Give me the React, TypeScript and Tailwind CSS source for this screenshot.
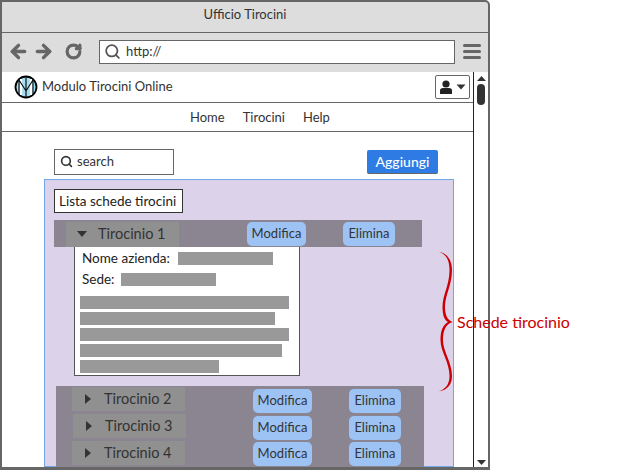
import React from 'react';
import { ArrowLeft, ArrowRight, RotateCw, Search } from 'lucide-react';

const uiFont = "font-['Lato','Noto_Sans',sans-serif]";

function ToolbarIcons() {
  return (
    <div className="flex items-center gap-[4px] text-[#666666]">
      <ArrowLeft className="w-[21px] h-[21px]" strokeWidth={4} />
      <ArrowRight className="w-[21px] h-[21px]" strokeWidth={4} />
      <RotateCw className="w-[17px] h-[17px] ml-[7px]" strokeWidth={4.5} />
    </div>
  );
}

function Logo() {
  return (
    <svg width="24" height="24" viewBox="0 0 24 24" className="shrink-0">
      <circle cx="12" cy="12" r="10.5" fill="#a5def0" stroke="#000" strokeWidth="1.8" />
      <path d="M7 4 L7 20 M17 4 L17 20" stroke="#fff" strokeWidth="2.2" />
      <path d="M5 20 L5 5 L12 16 L19 5 L19 20 M12 2 L12 22" fill="none" stroke="#111" strokeWidth="1.2" />
    </svg>
  );
}

function UserButton() {
  return (
    <div className="w-[35px] h-[24px] border border-[#666666] rounded-[2px] flex items-center justify-center gap-[2px] bg-white">
      <svg width="15" height="15" viewBox="0 0 15 15">
        <circle cx="7" cy="4" r="3.6" fill="#222" />
        <path d="M1 14 L1 10.5 Q1 8 4 8 L10 8 Q13 8 13 10.5 L13 14 Z" fill="#222" />
      </svg>
      <svg width="10" height="6" viewBox="0 0 10 6">
        <path d="M0.5 0.5 H9.5 L5 5.5 Z" fill="#333" />
      </svg>
    </div>
  );
}

function Scrollbar() {
  return (
    <div className="w-[15px] shrink-0 border-l border-[#222222] bg-white flex flex-col items-center pt-[4px] pb-[1px] justify-between">
      <div className="flex flex-col items-center gap-[3px]">
        <svg width="9" height="5" viewBox="0 0 9 5">
          <path d="M4.5 0 L9 5 H0 Z" fill="#333" />
        </svg>
        <div className="w-[8px] h-[21px] rounded-[4px] bg-[#333333]" />
      </div>
      <svg width="9" height="5" viewBox="0 0 9 5" className="mb-[1px]">
        <path d="M0 0 H9 L4.5 5 Z" fill="#333" />
      </svg>
    </div>
  );
}

function ActionButton({ label, width }: { label: string; width: string }) {
  return (
    <div className={`${width} h-[24px] rounded-[5px] bg-[#9dc3f5] text-[#333333] text-[13px] flex items-center justify-center`}>
      {label}
    </div>
  );
}

function Caret({ open }: { open?: boolean }) {
  return open ? (
    <svg width="10" height="6" viewBox="0 0 10 6" className="shrink-0">
      <path d="M0 0 H10 L5 6 Z" fill="#333" />
    </svg>
  ) : (
    <svg width="6" height="10" viewBox="0 0 6 10" className="shrink-0">
      <path d="M0 0 L6 5 L0 10 Z" fill="#333" />
    </svg>
  );
}

function ClosedRow({ title, shift, tight }: { title: string; shift?: boolean; tight?: boolean }) {
  return (
    <div className="flex items-start h-[26px]">
      <div className={`${shift ? 'ml-[17px]' : 'ml-[16px]'} w-[113px] h-[24px] bg-[#909090] flex items-center pl-[13px] gap-[13px] text-[14.5px] text-[#333333]`}>
        <Caret />
        <span>{title}</span>
      </div>
      <div className={`${shift ? 'ml-[67px]' : 'ml-[68px]'} ${tight ? 'mt-[1px]' : 'mt-[2px]'}`}>
        <ActionButton label="Modifica" width="w-[59px]" />
      </div>
      <div className={`ml-[37px] ${tight ? 'mt-[1px]' : 'mt-[2px]'}`}>
        <ActionButton label="Elimina" width="w-[52px]" />
      </div>
    </div>
  );
}

function GreyField({ width }: { width: string }) {
  return <div className={`${width} h-[13px] bg-[#999999]`} />;
}

function Brace() {
  return (
    <svg width="20" height="144" viewBox="436 250 20 144" className="absolute left-[436px] top-[250px] pointer-events-none">
      <path
        d="M439 252 C447 253 452 260 452 270 C452 285 445 295 445 307 C445 314 447 320 452.5 322 C446 324 443 330 443 340 C443 352 452 362 452 376 C452 385 447 390 439 391.5 C445 389 449.5 385 449.5 376 C449.5 362 440.5 352 440.5 340 C440.5 330 443 325 448 322 C444 320 442.5 314 442.5 307 C442.5 295 449.5 285 449.5 270 C449.5 260 446 254 439 252 Z"
        fill="#cc0000"
      />
    </svg>
  );
}

export default function App() {
  return (
    <div className={`relative w-[617px] h-[470px] overflow-hidden bg-white ${uiFont}`}>
      <div className="w-[490px] h-[470px] flex flex-col border-2 border-b-[3px] border-[#666666] rounded-tr-[5px] bg-[#dddddd] overflow-hidden">
        <div className="h-[31px] shrink-0 border-b border-[#666666] flex items-center justify-center pb-[5px] text-[13px] text-[#333333]">
          Ufficio Tirocini
        </div>
        <div className="h-[39px] shrink-0 flex items-center pl-[6px] pr-[5px] pb-[2px]">
          <ToolbarIcons />
          <div className="ml-[17px] w-[356px] h-[24px] bg-white border border-[#666666] flex items-center pl-[4px] gap-[5px] text-[13px] text-[#333333]">
            <Search className="w-[17px] h-[17px] text-[#555555]" strokeWidth={2.5} />
            http://
          </div>
          <div className="ml-[8px] flex flex-col gap-[3px]">
            <div className="w-[18px] h-[3px] rounded-[2px] bg-[#666666]" />
            <div className="w-[18px] h-[3px] rounded-[2px] bg-[#666666]" />
            <div className="w-[18px] h-[3px] rounded-[2px] bg-[#666666]" />
          </div>
        </div>
        <div className="flex-1 min-h-0 flex bg-white">
          <div className="flex-1 min-w-0 flex flex-col overflow-hidden">
            <div className="h-[31px] shrink-0 border-b border-[#666666] flex items-center pl-[12px] pr-[3px] text-[13px] text-[#333333]">
              <Logo />
              <span className="ml-[4px]">Modulo Tirocini Online</span>
              <div className="ml-auto">
                <UserButton />
              </div>
            </div>
            <div className="h-[29px] shrink-0 border-b border-[#666666] flex items-center pl-[188px] pt-[1px] gap-[18px] text-[13px] text-[#333333]">
              <span>Home</span>
              <span>Tirocini</span>
              <span>Help</span>
            </div>
            <div className="pl-[52px] pt-[16px] flex items-center h-[43px] shrink-0">
              <div className="w-[120px] h-[26px] border border-[#666666] flex items-center pl-[5px] gap-[4px] text-[13px] text-[#333333]">
                <Search className="w-[13px] h-[13px] text-[#333333]" strokeWidth={3} />
                search
              </div>
              <div className="ml-[193px] w-[71px] h-[24px] rounded-[2px] bg-[#2e7be4] border-b border-[#666666] text-white text-[14px] font-medium flex items-center justify-center">
                Aggiungi
              </div>
            </div>
            <div className="ml-[42px] mt-[4px] w-[410px] flex-1 min-h-0 bg-[#dcd3eb] border border-[#6ea8e6] pt-[9px]">
              <div className="ml-[9px] w-[129px] h-[24px] bg-white border border-[#333333] flex items-center pl-[4px] text-[13.5px] text-[#222222]">
                Lista schede tirocini
              </div>
              <div className="ml-[9px] mt-[7px] w-[368px] h-[27px] bg-[#8a8590] flex items-center pt-[1px]">
                <div className="ml-[12px] w-[113px] h-[25px] bg-[#909090] flex items-center pl-[11px] gap-[11px] text-[14.5px] text-[#333333]">
                  <Caret open />
                  <span>Tirocinio 1</span>
                </div>
                <div className="ml-[68px]">
                  <ActionButton label="Modifica" width="w-[59px]" />
                </div>
                <div className="ml-[37px]">
                  <ActionButton label="Elimina" width="w-[52px]" />
                </div>
              </div>
              <div className="ml-[29px] w-[226px] h-[129px] bg-white border border-[#555555] border-t-0 px-[5px] text-[13.5px] text-[#222222]">
                <div className="flex items-center h-[22px] pt-[1px] pl-[2px]">
                  <span className="w-[96px]">Nome azienda:</span>
                  <GreyField width="w-[95px]" />
                </div>
                <div className="flex items-center h-[22px] pl-[2px] mt-[-1px]">
                  <span className="w-[39px]">Sede:</span>
                  <GreyField width="w-[95px]" />
                </div>
                <div className="mt-[6px] flex flex-col gap-[3px]">
                  <GreyField width="w-[209px]" />
                  <GreyField width="w-[195px]" />
                  <GreyField width="w-[209px]" />
                  <GreyField width="w-[202px]" />
                  <GreyField width="w-[139px]" />
                </div>
              </div>
              <div className="ml-[11px] mt-[10px] w-[368px] h-[82px] bg-[#8a8590] flex flex-col pt-[1px] gap-[1px]">
                <ClosedRow title="Tirocinio 2" />
                <ClosedRow title="Tirocinio 3" shift />
                <ClosedRow title="Tirocinio 4" tight />
              </div>
            </div>
          </div>
          <Scrollbar />
        </div>
      </div>
      <Brace />
      <span className="absolute left-[457px] top-[313px] text-[16px] leading-[18px] text-[#cc0000]">Schede tirocinio</span>
    </div>
  );
}
